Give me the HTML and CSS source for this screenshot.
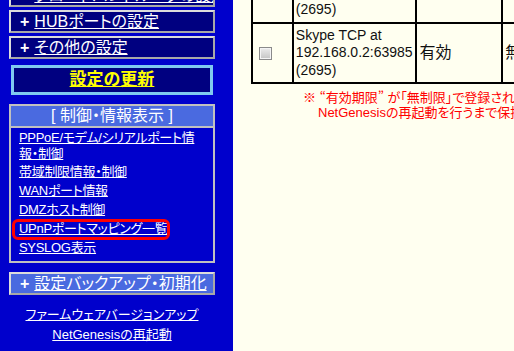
FILE: index.html
```html
<!DOCTYPE html>
<html lang="ja">
<head>
<meta charset="UTF-8">
<title>UPnPポートマッピング一覧</title>
<link rel="stylesheet" href="styles.css">
</head>
<body>

<div class="page">
  <div class="sidebar">
    <div class="menu-box"><span class="plus">+</span><a href="#">ブロードバンドルータの設定</a></div>
    <div class="menu-box"><span class="plus">+</span><a href="#">HUBポートの設定</a></div>
    <div class="menu-box"><span class="plus">+</span><a href="#">その他の設定</a></div>

    <div class="update-box"><a href="#">設定の更新</a></div>

    <div class="section-box">
      <div class="section-title">[ 制御・情報表示 ]</div>
      <ul class="section-list">
        <li><a href="#">PPPoE/モデム/シリアルポート情報・制御</a></li>
        <li><a href="#">帯域制限情報・制御</a></li>
        <li><a href="#">WANポート情報</a></li>
        <li><a href="#">DMZホスト制御</a></li>
        <li class="highlight"><a href="#">UPnPポートマッピング一覧</a></li>
        <li><a href="#">SYSLOG表示</a></li>
      </ul>
    </div>

    <div class="menu-box light"><span class="plus">+</span><a href="#">設定バックアップ・初期化</a></div>

    <div class="footer-links">
      <a href="#">ファームウェアバージョンアップ</a>
      <a href="#">NetGenesisの再起動</a>
    </div>
  </div>

  <div class="content">
    <table class="map-table">
      <tr>
        <td class="check-cell"><input type="checkbox"></td>
        <td class="desc-cell">Skype UDP at<br>192.168.0.2:63985<br>(2695)</td>
        <td class="state-cell"><span class="jp">有効</span></td>
        <td class="limit-cell"><span class="jp">無制限</span></td>
      </tr>
      <tr>
        <td class="check-cell"><input type="checkbox"></td>
        <td class="desc-cell">Skype TCP at<br>192.168.0.2:63985<br>(2695)</td>
        <td class="state-cell"><span class="jp">有効</span></td>
        <td class="limit-cell"><span class="jp">無制限</span></td>
      </tr>
    </table>
    <div class="note">
      <p class="note-first">※ <span class="cjk">“</span>有効期限<span class="cjk">”</span> が「無制限」で登録されたエントリは、</p>
      <p class="note-second">NetGenesisの再起動を行うまで保持されます。</p>
    </div>
  </div>
</div>

</body>
</html>
```

FILE: styles.css
```css
html, body {
  margin: 0;
  padding: 0;
  height: 100%;
  overflow: hidden;
}

body {
  font-family: "Liberation Sans", "Noto Sans CJK JP", sans-serif;
  font-feature-settings: "palt";
  background-color: #fffff0;
}

/* page is shown scrolled down a little */
.page {
  display: flex;
  margin-top: -41px;
  min-height: calc(100vh + 41px);
}

a {
  color: white;
}

/* Left menu */
.sidebar {
  width: 233px;
  flex-shrink: 0;
  background-color: #0000cc;
  padding-top: 25px;
  box-sizing: border-box;
}

.menu-box {
  width: 206px;
  height: 23px;
  margin: 0 0 3px 9px;
  box-sizing: border-box;
  border: 2px solid #c8c8c8;
  border-color: #dcdcdc #a8a8a8 #a8a8a8 #dcdcdc;
  background-color: #000080;
  padding-left: 9px;
  font-size: 16px;
  line-height: 19px;
  color: white;
  white-space: nowrap;
  overflow: hidden;
}

.menu-box .plus {
  font-weight: bold;
  margin-right: 5px;
}

.menu-box.light {
  background-color: #4a6ae0;
  margin-top: 9px;
}

.update-box {
  width: 202px;
  height: 30px;
  margin: 6px 0 9px 11px;
  box-sizing: border-box;
  border: 3px solid #80c8f0;
  background-color: #000080;
  text-align: center;
  font-size: 17px;
  line-height: 24px;
  font-weight: bold;
}

.update-box a {
  color: #ffff00;
}

.section-box {
  width: 206px;
  margin-left: 9px;
  box-sizing: border-box;
  border: 2px solid #c0c0c0;
}

.section-title {
  height: 20px;
  background-color: #4a6ae0;
  border-bottom: 2px solid #c0c0c0;
  color: white;
  text-align: center;
  font-size: 16px;
  line-height: 20px;
}

.section-list {
  list-style: none;
  margin: 0;
  padding: 2px 8px 5px 8px;
  font-size: 13px;
  line-height: 16px;
  letter-spacing: -0.3px;
}

.section-list li {
  position: relative;
  margin-top: 3px;
}

.section-list li:first-child {
  margin-top: 0;
}

.section-list li:nth-child(2) {
  margin-top: 2px;
}

.highlight::after {
  content: "";
  position: absolute;
  left: -7px;
  top: -2px;
  width: 158px;
  height: 21px;
  border: 3px solid #ff0000;
  border-radius: 6px;
  box-sizing: border-box;
}

.footer-links {
  width: 206px;
  margin: 10px 0 0 9px;
  text-align: center;
  font-size: 13px;
  line-height: 20px;
}

.footer-links a {
  display: block;
}

/* Right content */
.content {
  flex: 1;
  padding: 2px 0 0 18px;
  white-space: nowrap;
  overflow: hidden;
}

.map-table {
  border: 1px solid black;
  border-spacing: 0;
  table-layout: fixed;
  width: 340px;
  font-size: 14px;
  line-height: 17.5px;
  color: #111;
}

.map-table td {
  border: 1px solid black;
  padding: 3px 2px;
  vertical-align: middle;
  overflow: hidden;
}

.check-cell {
  width: 34px;
}

.desc-cell {
  width: 115px;
}

.state-cell {
  width: 78px;
}

.limit-cell {
  width: 80px;
}

.jp {
  font-size: 16px;
}

.check-cell input {
  appearance: none;
  width: 13px;
  height: 13px;
  margin: 0 0 0 4px;
  border: 1px solid #8a8a8a;
  background: linear-gradient(#ececec, #c4c4c4);
  box-shadow: inset 0 0 0 1px #f4f4f4;
  vertical-align: middle;
}

.note {
  margin-top: 5px;
  color: #ff0000;
  font-size: 13px;
  line-height: 15px;
}

.note p {
  margin: 0;
}

.note .cjk {
  font-family: "Noto Sans CJK JP", sans-serif;
  font-feature-settings: normal;
}

.note-first {
  padding-left: 52px;
}

.note-second {
  padding-left: 67px;
}
```
